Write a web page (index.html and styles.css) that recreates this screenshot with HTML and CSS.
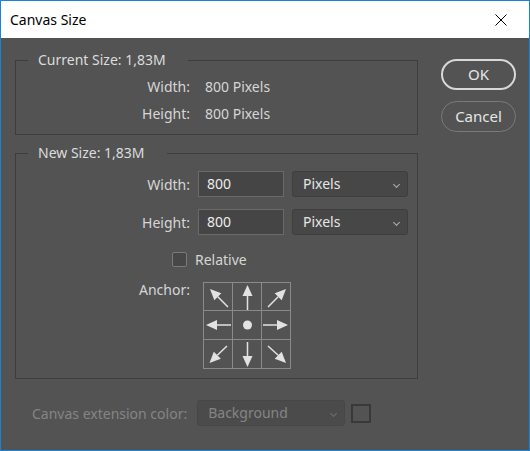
FILE: index.html
```html
<html>
  <head>
    <meta charset="utf-8">
    <title>Canvas Size</title>
    <link rel="stylesheet" href="styles.css">
  </head>
  <body>
    <div class="window">
      <div class="titlebar">
        <span class="title">Canvas Size</span>
        <svg class="close" width="12" height="12" viewBox="0 0 12 12">
          <path d="M0.5 0.5 L11.5 11.5 M11.5 0.5 L0.5 11.5" stroke="#000" stroke-width="1" fill="none"/>
        </svg>
      </div>

      <div class="content">
        <div class="main">
          <fieldset class="group current">
            <legend>Current Size: 1,83M</legend>
            <div class="info-row"><span class="label">Width:</span><span class="value">800 Pixels</span></div>
            <div class="info-row"><span class="label">Height:</span><span class="value">800 Pixels</span></div>
          </fieldset>

          <fieldset class="group newsize">
            <legend>New Size: 1,83M</legend>
            <div class="field-row">
              <span class="label">Width:</span>
              <div class="input">800</div>
              <div class="select">Pixels<span class="chev"></span></div>
            </div>
            <div class="field-row">
              <span class="label">Height:</span>
              <div class="input">800</div>
              <div class="select">Pixels<span class="chev"></span></div>
            </div>
            <div class="check-row">
              <span class="checkbox"></span>
              <span>Relative</span>
            </div>
            <div class="anchor-row">
              <span class="label">Anchor:</span>
              <svg class="anchor" width="89" height="88" viewBox="0 0 89 88">
                <g stroke="#8a8a8a" stroke-width="1" fill="none">
                  <rect x="0.5" y="0.5" width="87" height="86"/>
                  <path d="M29.5 0.5 V86.5 M58.5 0.5 V86.5 M0.5 28.5 H87.5 M0.5 57.5 H87.5"/>
                </g>
                <g fill="#e2e2e2" stroke="none">
                  <polygon points="44.5,3 49.5,14 39.5,14"/>
                  <polygon points="44.5,85 49.5,74 39.5,74"/>
                  <polygon points="3,43 14,38 14,48"/>
                  <polygon points="85,43 74,38 74,48"/>
                  <circle cx="44.5" cy="43" r="4.5"/>
                  <polygon points="7,7 18.3,11.3 11.3,18.3"/>
                  <polygon points="83,7 71.7,11.3 78.7,18.3"/>
                  <polygon points="6.5,81 10.8,69.7 17.8,76.7"/>
                  <polygon points="83,81 78.7,69.7 71.7,76.7"/>
                </g>
                <g stroke="#e2e2e2" stroke-width="1.5" fill="none">
                  <path d="M44.5 14 V28 M44.5 60 V74 M14 43 H28 M60 43 H74"/>
                  <path d="M14.8 14.8 L25 25 M75.2 14.8 L65 25 M14.3 73.2 L24 64 M75.2 73.2 L65 64"/>
                </g>
              </svg>
            </div>
          </fieldset>

          <div class="ext-row">
            <span class="ext-label">Canvas extension color:</span>
            <div class="select disabled">Background<span class="chev"></span></div>
            <span class="swatch"></span>
          </div>
        </div>

        <div class="buttons">
          <div class="btn primary">OK</div>
          <div class="btn">Cancel</div>
        </div>
      </div>
    </div>
  </body>
</html>
```

FILE: styles.css
```css
body {
  margin: 0;
  font-family: "Noto Sans", "Open Sans", sans-serif;
  font-size: 14px;
  color: #d6d6d6;
}

.window {
  width: 530px;
  height: 451px;
  box-sizing: border-box;
  border: 1px solid #1883d7;
  background: #535353;
  overflow: hidden;
}

.titlebar {
  height: 37px;
  background: #fff;
  display: flex;
  align-items: center;
  justify-content: space-between;
  padding: 0 22px 0 9px;
}

.title {
  color: #000;
  font-size: 14px;
}

.content {
  display: flex;
  padding-left: 14px;
}

.main {
  width: 403px;
}

.group {
  margin: 0;
  padding: 0;
  border: 1px solid #3d3d3d;
  min-width: 0;
}

.group legend {
  margin-left: 12px;
  padding: 0 22px 0 10px;
  line-height: 18px;
  color: #dcdcdc;
}

.current {
  margin-top: 13px;
  padding: 4px 0 7px 0;
}

.info-row {
  display: flex;
  align-items: center;
  height: 27px;
}

.label {
  width: 174px;
  text-align: right;
  flex-shrink: 0;
}

.value {
  margin-left: 15px;
}

.newsize {
  margin-top: 9px;
  padding: 8px 0 8px 0;
}

.field-row {
  display: flex;
  align-items: center;
  height: 28px;
  margin-bottom: 10px;
}

.input {
  margin-left: 8px;
  width: 86px;
  height: 26px;
  box-sizing: border-box;
  border: 1px solid #6a6a6a;
  background: #454545;
  color: #ececec;
  padding-left: 8px;
  line-height: 24px;
}

.select {
  position: relative;
  margin-left: 8px;
  width: 116px;
  height: 26px;
  box-sizing: border-box;
  border: 1px solid #3e3e3e;
  border-radius: 3px;
  background: #474747;
  color: #e6e6e6;
  padding-left: 10px;
  line-height: 24px;
}

.chev {
  position: absolute;
  right: 8px;
  top: 10px;
  width: 4px;
  height: 4px;
  border-right: 1px solid #b0b0b0;
  border-bottom: 1px solid #b0b0b0;
  transform: rotate(45deg);
}

.check-row {
  display: flex;
  align-items: center;
  height: 26px;
  padding-left: 156px;
}

.checkbox {
  width: 15px;
  height: 15px;
  box-sizing: border-box;
  border: 1px solid #7a7a7a;
  border-radius: 2px;
  background: #474747;
  margin-right: 8px;
}

.anchor-row {
  display: flex;
  align-items: flex-start;
  margin-top: 10px;
}

.anchor-row .label {
  line-height: 16px;
}

.anchor {
  display: block;
  margin-left: 13px;
}

.ext-row {
  display: flex;
  align-items: center;
  margin-top: 21px;
  color: #858585;
}

.ext-label {
  margin-left: 17px;
}

.select.disabled {
  margin-left: 10px;
  width: 148px;
  background: #4b4b4b;
  border-color: #474747;
  color: #858585;
}

.select.disabled .chev {
  border-color: #6f6f6f;
}

.swatch {
  margin-left: 6px;
  width: 20px;
  height: 19px;
  box-sizing: border-box;
  border: 2px solid #393939;
}

.buttons {
  margin-left: 23px;
  margin-top: 21px;
  display: flex;
  flex-direction: column;
  gap: 11px;
}

.btn {
  width: 75px;
  height: 31px;
  box-sizing: border-box;
  border: 1px solid #7a7a7a;
  border-radius: 16px;
  text-align: center;
  line-height: 29px;
  font-size: 15px;
  color: #e6e6e6;
}

.btn.primary {
  border: 2px solid #d8d8d8;
  line-height: 27px;
}
```
